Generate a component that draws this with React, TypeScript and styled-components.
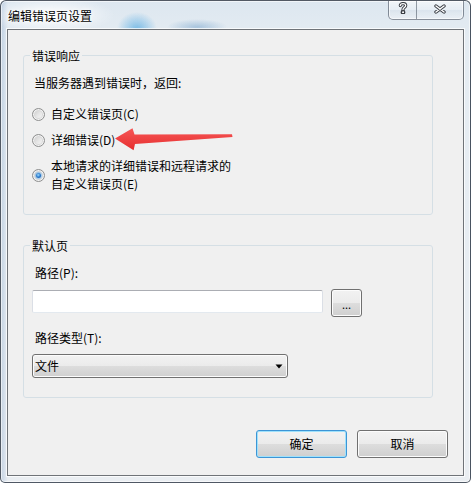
import React from "react";
import styled, { createGlobalStyle } from "styled-components";

const GlobalStyle = createGlobalStyle`
  html, body { margin: 0; padding: 0; }
  body {
    background: #ffffff;
    font-family: "Noto Sans CJK SC", "Noto Sans", sans-serif;
    font-size: 12px;
    color: #000;
  }
  * { box-sizing: border-box; }
`;

const Window = styled.div`
  position: relative;
  width: 471px;
  height: 483px;
  border: 1px solid rgba(38, 48, 60, 0.78);
  border-radius: 6px 6px 5px 5px;
  box-shadow: inset 0 0 0 1px rgba(255, 255, 255, 0.6);
  background:
    radial-gradient(ellipse 64px 18px at 50px 14px, rgba(255, 255, 255, 0.95), rgba(255, 255, 255, 0) 100%),
    radial-gradient(ellipse 20px 17px at 136px 28px, rgba(40, 150, 220, 0.55), rgba(60, 160, 225, 0.25) 60%, rgba(40, 145, 215, 0) 100%),
    radial-gradient(ellipse 30px 8px at 196px 26px, rgba(60, 125, 185, 0.35), rgba(60, 125, 185, 0) 100%),
    linear-gradient(to right, rgba(140, 170, 205, 0.4) 0, rgba(140, 170, 205, 0) 7px),
    linear-gradient(to bottom, #dde7f0 0, #e5ecf2 40px, #eaeef2 100%);
  display: flex;
  flex-direction: column;
  overflow: hidden;
`;

const TitleBar = styled.div`
  height: 28px;
  flex: none;
  display: flex;
  align-items: flex-start;
  padding: 0 6px 0 7px;
`;

const Title = styled.div`
  margin-top: 6px;
  line-height: 17px;
  text-shadow: 0 0 6px #fff, 0 0 3px #fff;
`;

const Caption = styled.div`
  margin-left: auto;
  display: flex;
  height: 19px;
  border: 1px solid rgba(70, 80, 95, 0.62);
  border-top: none;
  border-radius: 0 0 5px 5px;
  background: linear-gradient(
    to bottom,
    rgba(255, 255, 255, 0.6) 0,
    rgba(240, 244, 248, 0.45) 50%,
    rgba(215, 224, 233, 0.45) 51%,
    rgba(240, 244, 248, 0.6) 100%
  );
  box-shadow: inset 0 0 0 1px rgba(255, 255, 255, 0.55);
  overflow: hidden;
`;

const CaptionButton = styled.div<{ $w: number; $lift: number }>`
  width: ${(p) => p.$w}px;
  display: flex;
  align-items: center;
  justify-content: center;
  padding-bottom: ${(p) => p.$lift}px;
  & + & {
    border-left: 1px solid rgba(70, 80, 95, 0.55);
  }
`;

const Client = styled.div`
  margin: 0 6px;
  height: 447px;
  flex: none;
  border: 1px solid #6f7378;
  background: #f0f0f0;
  box-shadow: 0 0 0 1px rgba(255, 255, 255, 0.75);
  padding: 17px 15px 0 15px;
  display: flex;
  flex-direction: column;
`;

const Group = styled.fieldset<{ $mt: number }>`
  margin: ${(p) => p.$mt}px 0 0 0;
  width: 410px;
  min-inline-size: 0;
  border: 1px solid #d5dfe5;
  border-radius: 3px;
  padding: 0;
`;

const Legend = styled.legend`
  margin-left: 6px;
  padding: 0 2px;
  height: 17px;
  line-height: 17px;
`;

const GroupBody = styled.div<{ $pb: number }>`
  padding: 10px 0 ${(p) => p.$pb}px 8px;
  display: flex;
  flex-direction: column;
  align-items: flex-start;
`;

const Label = styled.div<{ $ml: number; $mt?: number }>`
  margin-left: ${(p) => p.$ml}px;
  margin-top: ${(p) => p.$mt ?? 0}px;
  line-height: 18px;
`;

const RadioList = styled.div`
  margin-top: 13px;
  display: flex;
  flex-direction: column;
  gap: 8px;
`;

const RadioRow = styled.label`
  display: flex;
  align-items: center;
  gap: 6px;
  line-height: 18px;
`;

const Radio = styled.span<{ $checked?: boolean }>`
  position: relative;
  flex: none;
  width: 13px;
  height: 13px;
  border-radius: 50%;
  border: 1px solid #8e8f8f;
  background: linear-gradient(135deg, #c6c6c6 0%, #e6e6e6 50%, #fbfbfb 100%);
  box-shadow: inset 0 0 0 1px #f3f3f3, inset 0 0 0 2px #d9d9d9;
  &::after {
    content: "";
    display: ${(p) => (p.$checked ? "block" : "none")};
    position: absolute;
    left: 3px;
    top: 3px;
    width: 5px;
    height: 5px;
    border-radius: 50%;
    background: radial-gradient(circle at 45% 40%, #9edcfc 0, #2d7cd0 50%, #104a8c 100%);
    box-shadow: 0 0 1px 1px rgba(90, 170, 235, 0.55);
  }
`;

const PathRow = styled.div`
  margin-top: 7px;
  display: flex;
  align-items: flex-start;
  gap: 8px;
`;

const TextBox = styled.div`
  margin-top: 1px;
  width: 291px;
  height: 23px;
  background: #fff;
  border: 1px solid #dbdfe6;
  border-top-color: #abadb3;
  border-bottom-color: #e3e9ef;
  border-radius: 2px;
`;

const PushButton = styled.button<{ $w: number; $default?: boolean }>`
  width: ${(p) => p.$w}px;
  height: 28px;
  padding: 0;
  font: inherit;
  color: #000;
  line-height: 18px;
  border: 1px solid ${(p) => (p.$default ? "#3c95d6" : "#707070")};
  border-radius: 3px;
  background: linear-gradient(to bottom, #f2f2f2 0%, #ebebeb 50%, #dddddd 51%, #cfcfcf 100%);
  box-shadow: inset 0 0 0 1px ${(p) => (p.$default ? "#9fe1fb" : "#fcfcfc")};
  display: flex;
  align-items: center;
  justify-content: center;
`;

const DotsText = styled.span`
  font-size: 11px;
  margin-top: 2px;
  letter-spacing: 0;
`;

const Combo = styled.div`
  margin-top: 7px;
  width: 256px;
  height: 24px;
  border: 1px solid #707070;
  border-radius: 3px;
  background: linear-gradient(to bottom, #f2f2f2 0%, #ebebeb 50%, #dddddd 51%, #cfcfcf 100%);
  box-shadow: inset 0 0 0 1px #fcfcfc;
  display: flex;
  align-items: center;
  padding: 0 4px 0 2px;
  line-height: 18px;
`;

const ComboText = styled.span`
  flex: 1;
`;

const Footer = styled.div`
  margin-top: 32px;
  display: flex;
  justify-content: flex-end;
  gap: 10px;
`;

const Annotation = styled.svg`
  position: absolute;
  left: 109px;
  top: 123px;
  width: 126px;
  height: 30px;
  pointer-events: none;
`;

const HelpGlyph = () => (
  <svg width="10" height="12" viewBox="0 0 10 12">
    <g fill="none" strokeLinecap="round" strokeLinejoin="round">
      <path d="M2.3 3.6 C2.3 0.9, 7.7 0.9, 7.7 3.6 C7.7 5.6, 5 5.5, 5 7.6" stroke="#3b3f46" strokeWidth="3.2" />
      <circle cx="5" cy="10.2" r="0.8" stroke="#3b3f46" strokeWidth="3.2" />
      <path d="M2.3 3.6 C2.3 0.9, 7.7 0.9, 7.7 3.6 C7.7 5.6, 5 5.5, 5 7.6" stroke="#ffffff" strokeWidth="1.3" />
      <circle cx="5" cy="10.2" r="0.5" fill="#fff" stroke="#ffffff" strokeWidth="0.8" />
    </g>
  </svg>
);

const CloseGlyph = () => (
  <svg width="12" height="10" viewBox="0 0 12 10">
    <g fill="none" strokeLinecap="round">
      <path d="M2 2 L10 8 M10 2 L2 8" stroke="#3b3f46" strokeWidth="3.4" />
      <path d="M2 2 L10 8 M10 2 L2 8" stroke="#ffffff" strokeWidth="1.5" />
    </g>
  </svg>
);

export default function App() {
  return (
    <>
      <GlobalStyle />
      <Window>
        <TitleBar>
          <Title>编辑错误页设置</Title>
          <Caption>
            <CaptionButton $w={27} $lift={4}>
              <HelpGlyph />
            </CaptionButton>
            <CaptionButton $w={47} $lift={2}>
              <CloseGlyph />
            </CaptionButton>
          </Caption>
        </TitleBar>
        <Client>
          <Group $mt={0}>
            <Legend>错误响应</Legend>
            <GroupBody $pb={21}>
              <Label $ml={2}>当服务器遇到错误时，返回:</Label>
              <RadioList>
                <RadioRow>
                  <Radio />
                  <span>自定义错误页(C)</span>
                </RadioRow>
                <RadioRow>
                  <Radio />
                  <span>详细错误(D)</span>
                </RadioRow>
                <RadioRow>
                  <Radio $checked />
                  <span>
                    本地请求的详细错误和远程请求的
                    <br />
                    自定义错误页(E)
                  </span>
                </RadioRow>
              </RadioList>
            </GroupBody>
          </Group>
          <Group $mt={22}>
            <Legend>默认页</Legend>
            <GroupBody $pb={19}>
              <Label $ml={3}>路径(P):</Label>
              <PathRow>
                <TextBox />
                <PushButton $w={31}>
                  <DotsText>...</DotsText>
                </PushButton>
              </PathRow>
              <Label $ml={3} $mt={12}>
                路径类型(T):
              </Label>
              <Combo>
                <ComboText>文件</ComboText>
                <svg width="8" height="5" viewBox="0 0 8 5">
                  <polygon points="0.5,0.5 7.5,0.5 4,4.5" fill="#000" />
                </svg>
              </Combo>
            </GroupBody>
          </Group>
          <Footer>
            <PushButton $w={91} $default>
              确定
            </PushButton>
            <PushButton $w={91}>取消</PushButton>
          </Footer>
        </Client>
        <Annotation viewBox="110 124 126 30">
          <defs>
            <linearGradient id="arrowFill" x1="0" y1="0" x2="0" y2="1">
              <stop offset="0" stopColor="#f65656" />
              <stop offset="1" stopColor="#e62e2e" />
            </linearGradient>
          </defs>
          <polygon
            points="115,138.5 132.5,128.2 134.5,134.4 232,134.2 232.5,136.9 135,144 133.6,150.3"
            fill="url(#arrowFill)"
          />
        </Annotation>
      </Window>
    </>
  );
}
